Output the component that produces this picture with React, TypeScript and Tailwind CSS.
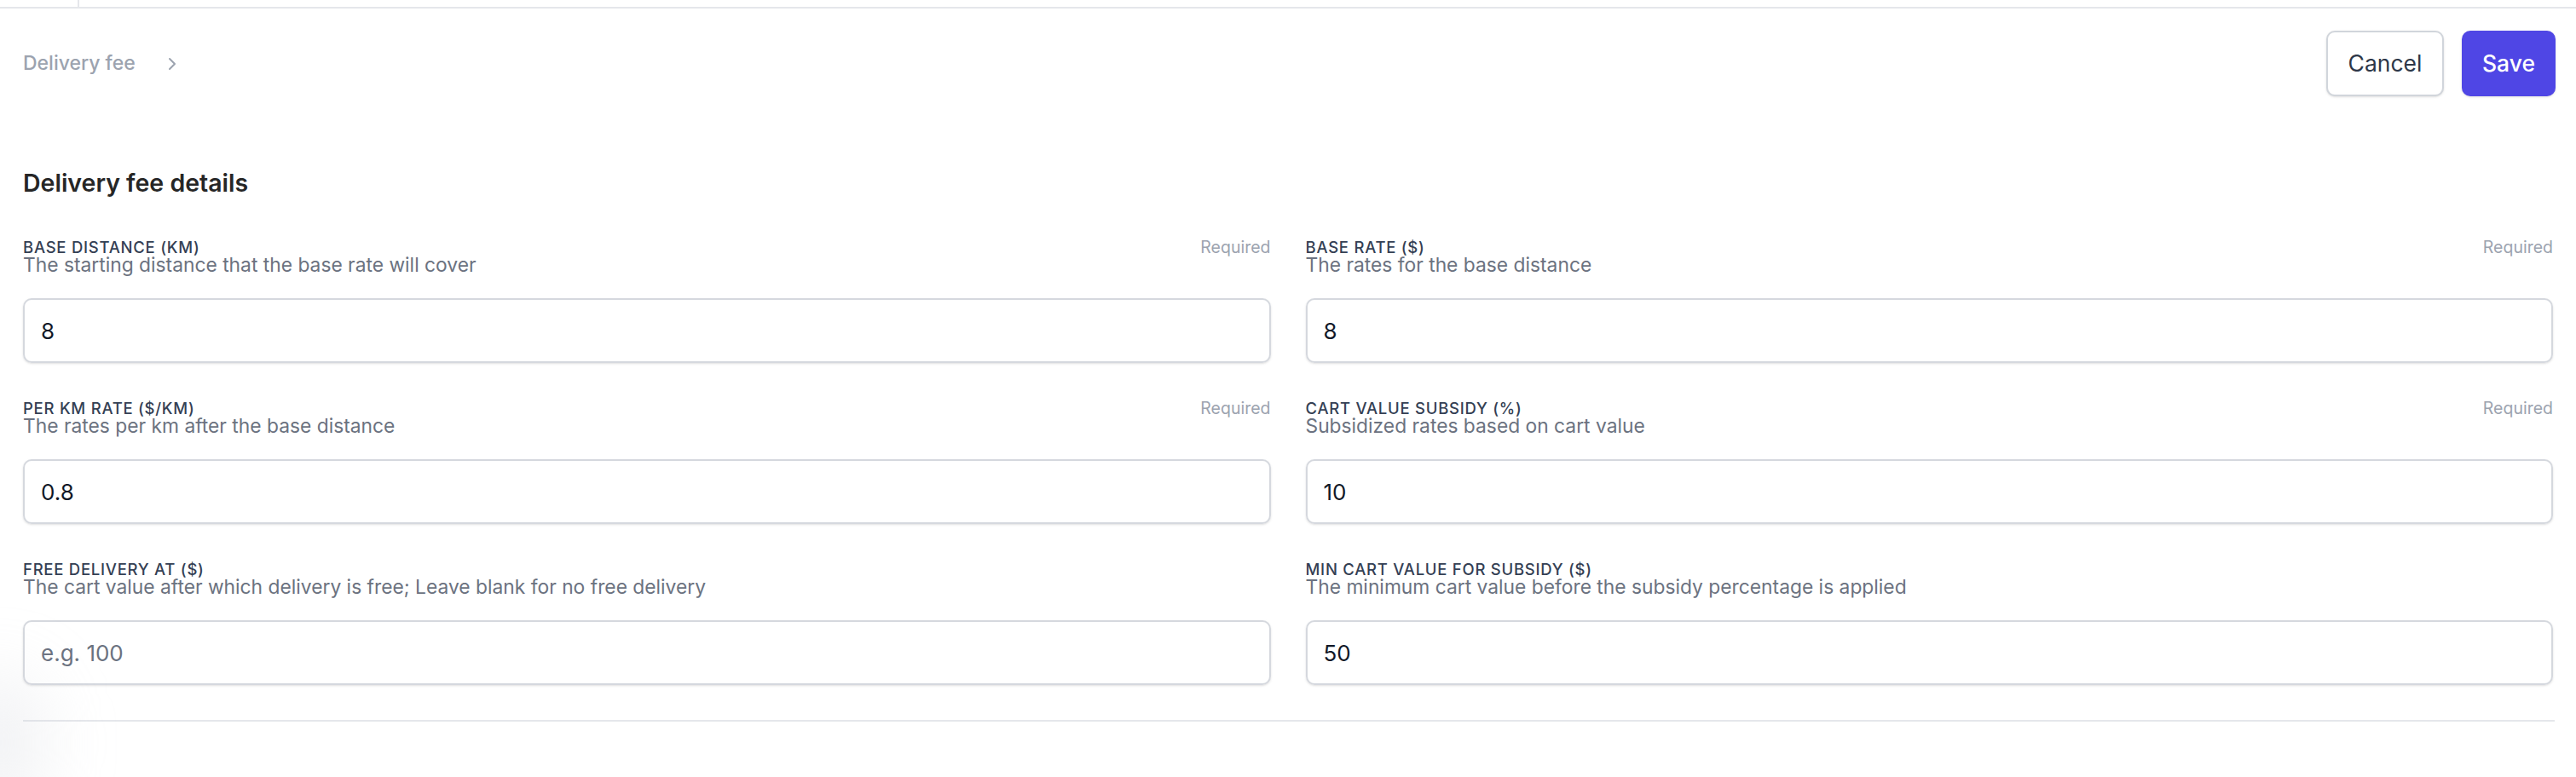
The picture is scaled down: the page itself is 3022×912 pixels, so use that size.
import { ChevronRight } from "lucide-react";

type Field = {
  label: string;
  hint: string;
  value?: string;
  placeholder?: string;
  required?: boolean;
};

const fields: Field[] = [
  {
    label: "Base distance (km)",
    hint: "The starting distance that the base rate will cover",
    value: "8",
    required: true,
  },
  {
    label: "Base rate ($)",
    hint: "The rates for the base distance",
    value: "8",
    required: true,
  },
  {
    label: "Per km rate ($/km)",
    hint: "The rates per km after the base distance",
    value: "0.8",
    required: true,
  },
  {
    label: "Cart value subsidy (%)",
    hint: "Subsidized rates based on cart value",
    value: "10",
    required: true,
  },
  {
    label: "Free delivery at ($)",
    hint: "The cart value after which delivery is free; Leave blank for no free delivery",
    placeholder: "e.g. 100",
  },
  {
    label: "Min cart value for subsidy ($)",
    hint: "The minimum cart value before the subsidy percentage is applied",
    value: "50",
  },
];

function FeeInput({ label, hint, value, placeholder, required }: Field) {
  return (
    <div className="flex flex-col">
      <div className="flex items-start justify-between">
        <label className="text-[18.5px] leading-[18px] font-medium uppercase tracking-[0.04em] text-[#344054]">
          {label}
        </label>
        {required && (
          <span className="text-[19.5px] leading-[18px] text-[#9ca3af]">
            Required
          </span>
        )}
      </div>
      <p className="mt-[-1px] text-[22.8px] leading-[26px] text-[#6b7280]">{hint}</p>
      <input
        type="text"
        defaultValue={value}
        placeholder={placeholder}
        className="mt-[26px] h-[76px] w-full rounded-[10px] border-2 border-[#d5d8de] px-[19px] text-[26px] text-[#111827] shadow-sm outline-none placeholder:text-[#6b7280]"
      />
    </div>
  );
}

export default function App() {
  return (
    <div className="relative min-h-[912px] overflow-hidden bg-white font-['Inter',sans-serif]">
      <div className="flex h-[10px] border-b-2 border-[#e5e7eb]">
        <div className="w-[93px] border-r-2 border-[#e5e7eb]" />
      </div>

      <div className="flex items-center justify-between pl-[27px] pr-[24px] pt-[26px]">
        <nav className="flex items-center gap-[31px] text-[23px] font-medium text-[#9ca3af]">
          <span>Delivery fee</span>
          <ChevronRight className="h-[24px] w-[24px]" strokeWidth={2} />
        </nav>
        <div className="flex items-center gap-[21px]">
          <button
            type="button"
            className="h-[77px] w-[138px] rounded-[10px] border-2 border-[#d1d5db] bg-white text-[26.5px] text-[#2d3748] shadow-sm"
          >
            Cancel
          </button>
          <button
            type="button"
            className="h-[77px] w-[110px] rounded-[10px] bg-[#4f46e5] text-[26.5px] font-medium text-white shadow-sm"
          >
            Save
          </button>
        </div>
      </div>

      <div className="mx-[25px] mt-[84px]">
        <h2 className="px-[2px] text-[28.5px] leading-[36px] font-semibold text-[#262626]">
          Delivery fee details
        </h2>
        <div className="mt-[48px] grid grid-cols-2 gap-x-[41px] gap-y-[44px] px-[2px]">
          {fields.map((f) => (
            <FeeInput key={f.label} {...f} />
          ))}
        </div>
        <div className="mt-[41px] ml-[2px] h-[2px] w-[2970px] bg-[#e5e7eb]" />
      </div>

      <div className="pointer-events-none absolute -left-[60px] bottom-[-40px] h-[160px] w-[110px] rounded-full bg-gray-300/30 blur-2xl" />
    </div>
  );
}
